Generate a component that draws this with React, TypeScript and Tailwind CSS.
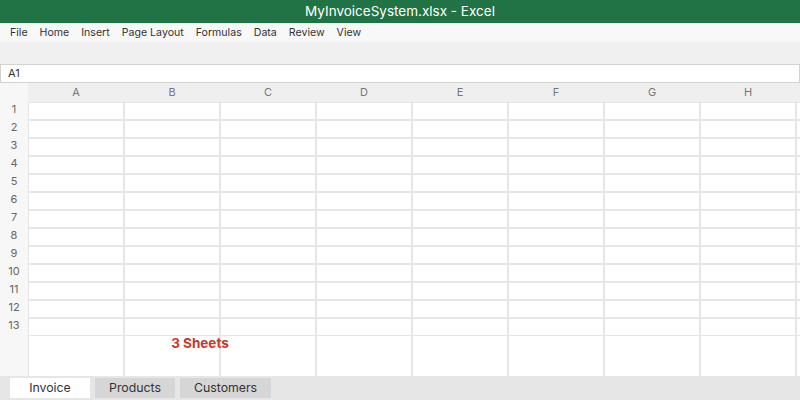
import React from "react"

const menus = ["File", "Home", "Insert", "Page Layout", "Formulas", "Data", "Review", "View"]
const cols = ["A", "B", "C", "D", "E", "F", "G", "H", ""]
const rows = Array.from({ length: 13 }, (_, i) => i + 1)
const sheets = ["Invoice", "Products", "Customers"]

export default function App() {
  return (
    <div className="w-[800px] h-[400px] flex flex-col overflow-hidden bg-white font-['Inter',sans-serif]">
      {/* Title bar */}
      <div className="h-[23px] shrink-0 bg-[#217346] text-white text-[13.5px] flex items-center justify-center">
        MyInvoiceSystem.xlsx - Excel
      </div>

      {/* Menu */}
      <div className="h-[19px] shrink-0 bg-[#f8f8f8] flex items-center gap-[12px] px-[10px] text-[10.6px] text-[#333]">
        {menus.map((m) => (
          <span key={m}>{m}</span>
        ))}
      </div>

      {/* Ribbon (empty) */}
      <div className="h-[22px] shrink-0 bg-[#f0f0f0]" />

      {/* Name box */}
      <div className="h-[19px] shrink-0 bg-white border border-[#d2d2d2] flex items-center px-[7px] text-[11px] text-[#333]">
        A1
      </div>

      {/* Sheet grid */}
      <div className="flex-1 flex flex-col min-h-0">
        <div className="h-[19px] shrink-0 flex">
          <div className="w-[28px] shrink-0 bg-[#f7f7f7]" />
          {cols.map((c, i) => (
            <div key={i} className="w-[96px] shrink-0 bg-[#efefef] flex items-center justify-center text-[11px] text-[#777]">
              {c}
            </div>
          ))}
        </div>
        {rows.map((r) => (
          <div key={r} className="h-[18px] shrink-0 flex">
            <div className="w-[28px] shrink-0 bg-[#f7f7f7] flex items-center justify-center pb-[4px] text-[11px] text-[#666]">
              {r}
            </div>
            {cols.map((c, i) => (
              <div key={i} className="w-[96px] shrink-0 bg-white border border-[#e6e6e6]" />
            ))}
          </div>
        ))}
        <div className="flex-1 flex relative">
          <div className="w-[28px] shrink-0 bg-[#f7f7f7]" />
          {cols.map((c, i) => (
            <div key={i} className="w-[96px] shrink-0 bg-white border-x border-[#e6e6e6]" />
          ))}
          <div className="absolute left-[200px] top-[1px] -translate-x-1/2 text-[13.5px] leading-none font-bold text-[#c8372d] whitespace-nowrap">
            3 Sheets
          </div>
        </div>
      </div>

      {/* Sheet tabs */}
      <div className="h-[24px] shrink-0 bg-[#e6e6e6] flex items-start gap-[5px] pl-[10px] pt-[2px]">
        {sheets.map((s, i) => (
          <div
            key={s}
            className={`h-[20px] min-w-[80px] px-[14px] flex items-center justify-center text-[12.3px] text-[#333] ${
              i === 0 ? "bg-white" : "bg-[#d6d6d6]"
            }`}
          >
            {s}
          </div>
        ))}
      </div>
    </div>
  )
}
